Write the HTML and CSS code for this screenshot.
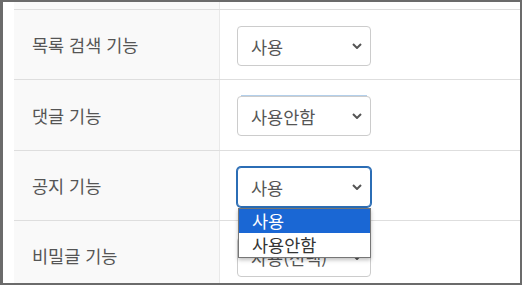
FILE: index.html
```html
<!DOCTYPE html>
<html lang="ko">
<head>
<meta charset="utf-8">
<link rel="stylesheet" href="styles.css">
</head>
<body>
<div class="frame">
  <div class="table">
    <div class="row row-cut">
      <div class="label"></div>
      <div class="value"></div>
    </div>
    <div class="row row-a">
      <div class="label">목록 검색 기능</div>
      <div class="value">
        <div class="select"><span>사용</span><svg class="chev" width="10" height="6" viewBox="0 0 10 6"><path d="M1 1l4 4 4-4" fill="none" stroke="#555" stroke-width="2"/></svg></div>
      </div>
    </div>
    <div class="row row-b">
      <div class="label">댓글 기능</div>
      <div class="value">
        <div class="select select-glow"><span>사용안함</span><svg class="chev" width="10" height="6" viewBox="0 0 10 6"><path d="M1 1l4 4 4-4" fill="none" stroke="#555" stroke-width="2"/></svg></div>
      </div>
    </div>
    <div class="row row-a">
      <div class="label">공지 기능</div>
      <div class="value">
        <div class="select select-focus"><span>사용</span><svg class="chev" width="10" height="6" viewBox="0 0 10 6"><path d="M1 1l4 4 4-4" fill="none" stroke="#555" stroke-width="2"/></svg>
          <ul class="dropdown">
            <li class="opt opt-active">사용</li>
            <li class="opt">사용안함</li>
          </ul>
        </div>
      </div>
    </div>
    <div class="row row-last">
      <div class="label">비밀글 기능</div>
      <div class="value">
        <div class="select"><span>사용(선택)</span><svg class="chev" width="10" height="6" viewBox="0 0 10 6"><path d="M1 1l4 4 4-4" fill="none" stroke="#555" stroke-width="2"/></svg></div>
      </div>
    </div>
  </div>
</div>
</body>
</html>
```

FILE: styles.css
```css
* { box-sizing: border-box; }
html, body { margin: 0; padding: 0; background: #fff; }
body {
  font-family: "Noto Sans CJK KR", "Noto Sans", sans-serif;
  width: 522px;
  height: 285px;
  overflow: hidden;
}
.frame {
  width: 522px;
  height: 285px;
  border-style: solid;
  border-color: #6b6b6b;
  border-width: 2px 2px 2px 3px;
  background: #fff;
  padding-left: 11px;
  overflow: hidden;
}
.table {
  display: flex;
  flex-direction: column;
  width: 506px;
}
.row {
  display: flex;
  border-top: 1px solid #dedede;
}
.row-cut { border-top: none; height: 7px; }
.row-a { height: 70px; }
.row-b { height: 71px; }
.row-last { height: 70px; }
.label {
  width: 206px;
  flex: none;
  background: #f9f9f9;
  border-right: 1px solid #e9e9e9;
  padding-left: 18px;
  display: flex;
  align-items: center;
  font-size: 17.5px;
  color: #555;
}
.value {
  flex: 1;
  padding: 16px 0 0 17px;
}
.select {
  position: relative;
  width: 134px;
  height: 40px;
  border: 1px solid #ccc;
  border-radius: 4px;
  background: #fff;
  display: flex;
  align-items: center;
  justify-content: space-between;
  padding: 0 8px 0 13px;
  font-size: 17.5px;
  color: #555;
}
.chev { display: block; }
.select-glow::before {
  content: "";
  position: absolute;
  left: 3px;
  right: 3px;
  top: -2px;
  height: 1px;
  background: #b3cfea;
}
.select-focus {
  border-color: #2b6db5;
  box-shadow: 0 0 0 1px #2b6db5;
}
.dropdown {
  position: absolute;
  top: 40px;
  left: 0;
  width: 133px;
  margin: 0;
  padding: 0;
  list-style: none;
  background: #fff;
  border: 1px solid #767676;
  box-shadow: 0 2px 4px rgba(0,0,0,0.25);
  z-index: 5;
}
.opt {
  height: 24px;
  line-height: 24px;
  padding-left: 13px;
  font-size: 17.5px;
  color: #333;
}
.opt-active {
  background: #1a67d4;
  color: #fff;
}
```
